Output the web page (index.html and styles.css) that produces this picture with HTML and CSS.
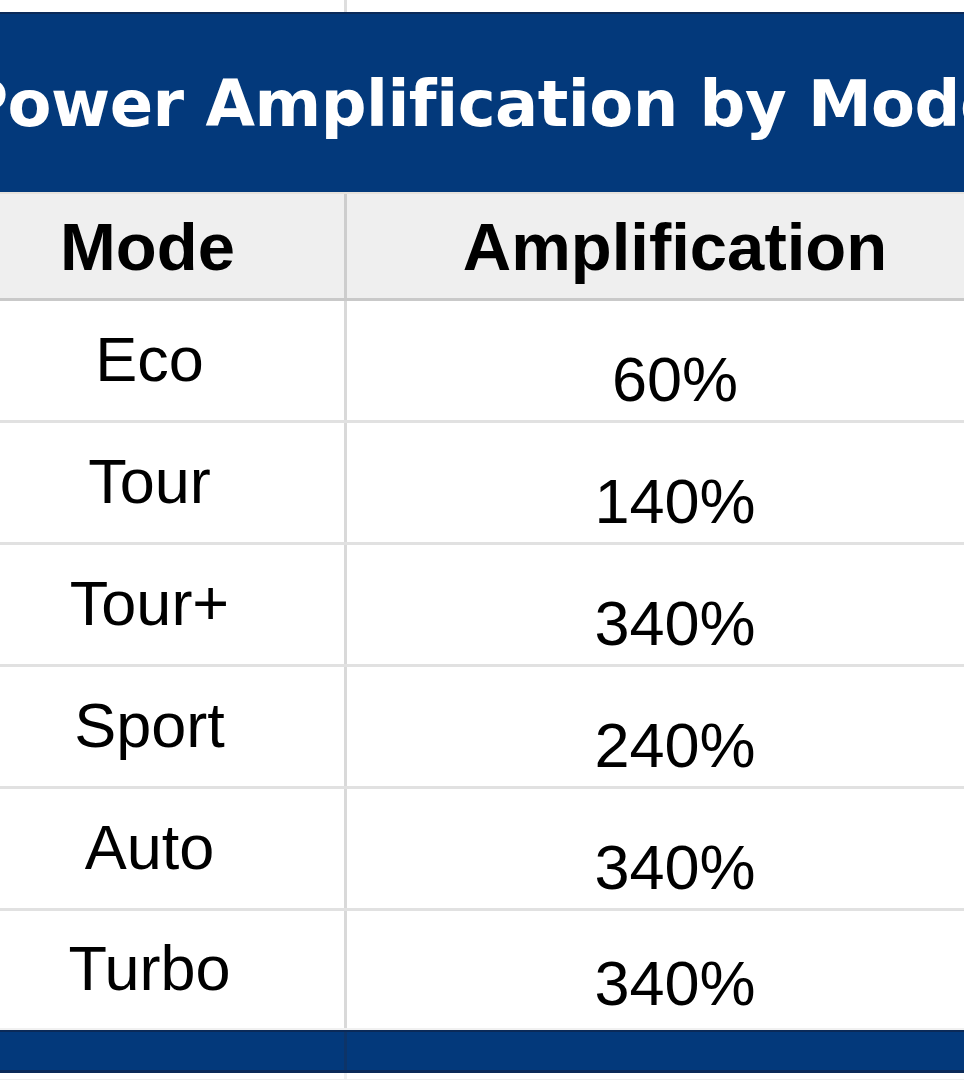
FILE: index.html
```html
<!DOCTYPE html>
<html>
<head>
<meta charset="utf-8">
<link rel="stylesheet" href="styles.css">
</head>
<body>
<div class="sheet">
  <div class="row top"><div class="cell c1"></div><div class="cell c2"></div></div>
  <div class="title"><span>Power Amplification by Mode</span></div>
  <div class="row head"><div class="cell c1">Mode</div><div class="cell c2">Amplification</div></div>
  <div class="row data"><div class="cell c1">Eco</div><div class="cell c2 val">60%</div></div>
  <div class="row data"><div class="cell c1">Tour</div><div class="cell c2 val">140%</div></div>
  <div class="row data"><div class="cell c1">Tour+</div><div class="cell c2 val">340%</div></div>
  <div class="row data"><div class="cell c1">Sport</div><div class="cell c2 val">240%</div></div>
  <div class="row data"><div class="cell c1">Auto</div><div class="cell c2 val">340%</div></div>
  <div class="row data last"><div class="cell c1">Turbo</div><div class="cell c2 val">340%</div></div>
  <div class="row foot"><div class="cell c1"></div><div class="cell c2"></div></div>
  <div class="row after"><div class="cell c1"></div><div class="cell c2"></div></div>
</div>
</body>
</html>
```
FILE: styles.css
```css
html, body {
  margin: 0;
  padding: 0;
  background: #ffffff;
}
body {
  width: 964px;
  height: 1080px;
  overflow: hidden;
  font-family: "Liberation Sans", Arial, sans-serif;
  color: #000;
}
.sheet {
  margin-left: -49px;
  width: 1052px;
}
.row {
  display: grid;
  grid-template-columns: 396px 656px;
  box-sizing: border-box;
}
.cell {
  box-sizing: border-box;
  display: flex;
  justify-content: center;
  align-items: center;
  line-height: 1;
  white-space: nowrap;
}
.c1 {
  border-right: 3px solid #d9d9d9;
}
.top {
  height: 12px;
}
.top .c1 {
  border-right-color: #dedede;
}
.title {
  box-sizing: border-box;
  height: 182px;
  background: #03397b;
  border-top: 2px solid #0b2a58;
  border-bottom: 2px solid #e6e2dc;
  display: flex;
  align-items: center;
  justify-content: center;
  padding-left: 10px;
  padding-top: 2px;
  white-space: nowrap;
  overflow: hidden;
}
.title span {
  font-family: "DejaVu Sans", sans-serif;
  font-weight: bold;
  font-size: 64px;
  color: #ffffff;
  line-height: 1;
  letter-spacing: -0.5px;
}
.head {
  height: 107px;
  background: #efefef;
  border-bottom: 3px solid #c9c9c9;
}
.head .cell {
  font-weight: bold;
  font-size: 67px;
}
.head .c1 {
  border-right-color: #cdcdcd;
}
.data {
  height: 122px;
  border-bottom: 3px solid #e1e1e1;
}
.data .cell {
  font-size: 63px;
}
.data .c1 {
  padding-bottom: 2px;
  padding-left: 4px;
}
.data .val {
  align-items: flex-end;
  padding-bottom: 9px;
}
.data.last {
  height: 119px;
  border-bottom: 2px solid #f1f1f1;
}
.data.last .val {
  padding-bottom: 13px;
}
.foot {
  height: 43px;
  background: #03397b;
  border-top: 2px solid #0b2a58;
  border-bottom: 3px solid #0b2a58;
}
.foot .c1 {
  border-right-color: #0d3468;
}
.after {
  height: 7px;
  border-bottom: 1px solid #eeeeee;
}
.after .c1 {
  border-right-color: #f0f0f0;
}
```
